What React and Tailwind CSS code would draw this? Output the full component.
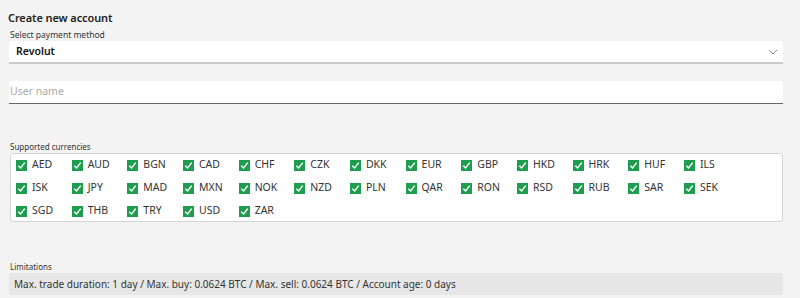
import React from "react";

const CURRENCIES = [
  "AED", "AUD", "BGN", "CAD", "CHF", "CZK", "DKK", "EUR", "GBP", "HKD", "HRK", "HUF", "ILS",
  "ISK", "JPY", "MAD", "MXN", "NOK", "NZD", "PLN", "QAR", "RON", "RSD", "RUB", "SAR", "SEK",
  "SGD", "THB", "TRY", "USD", "ZAR",
];

function Check() {
  return (
    <span className="w-[11px] h-[11px] bg-[#1f9d4f] flex items-center justify-center shrink-0">
      <svg width="9" height="9" viewBox="0 0 10 10">
        <path d="M1.5 5.2 L4 7.8 L8.6 1.8" fill="none" stroke="#fff" strokeWidth="1.6" />
      </svg>
    </span>
  );
}

export default function App() {
  return (
    <div
      className="w-[800px] h-[298px] bg-[#f3f3f3] text-[#222] overflow-hidden"
      style={{ fontFamily: '"Noto Sans", "Liberation Sans", sans-serif' }}
    >
      <div className="ml-[9px] w-[774px] pt-[9px]">
        <h1 className="text-[11px] font-semibold leading-[18px] -ml-[1px] tracking-[-0.1px]">Create new account</h1>

        <div className="text-[8.5px] leading-[12px] text-[#333] mt-[2px] ml-[1px]">Select payment method</div>
        <div className="h-[23px] bg-white border-b-2 border-[#c9c9c9] flex items-center justify-between pl-[7px] pr-[5px] rounded-t-[2px]">
          <span className="text-[10.5px] font-semibold text-[#111]">Revolut</span>
          <svg width="10" height="6" viewBox="0 0 10 6">
            <path d="M1 1 L5 5 L9 1" fill="none" stroke="#888" strokeWidth="1" />
          </svg>
        </div>

        <div className="mt-[17px] h-[23px] bg-white border-b border-[#666] flex items-center pl-[1px] rounded-t-[2px]">
          <span className="text-[10.5px] text-[#aaa]">User name</span>
        </div>

        <div className="text-[8px] leading-[12px] text-[#333] mt-[37px] ml-[1px]">Supported currencies</div>
        <div className="ml-[1px] w-[773px] h-[69px] bg-white border border-[#d4d4d4] rounded-[3px] pl-[5px] grid grid-cols-[repeat(13,55.67px)] grid-rows-[22px_22px_22px] gap-y-[1px]">
          {CURRENCIES.map((c) => (
            <div key={c} className="flex items-center gap-[5px]">
              <Check />
              <span className="text-[10.5px] text-[#333]">{c}</span>
            </div>
          ))}
        </div>

        <div className="text-[8px] leading-[12px] text-[#333] mt-[39px] ml-[1px]">Limitations</div>
        <div className="h-[22px] bg-[#e7e7e7] rounded-[2px] flex items-center pl-[5px]">
          <span className="text-[10px] text-[#333]">
            Max. trade duration: 1 day / Max. buy: 0.0624 BTC / Max. sell: 0.0624 BTC / Account age: 0 days
          </span>
        </div>
      </div>
    </div>
  );
}
